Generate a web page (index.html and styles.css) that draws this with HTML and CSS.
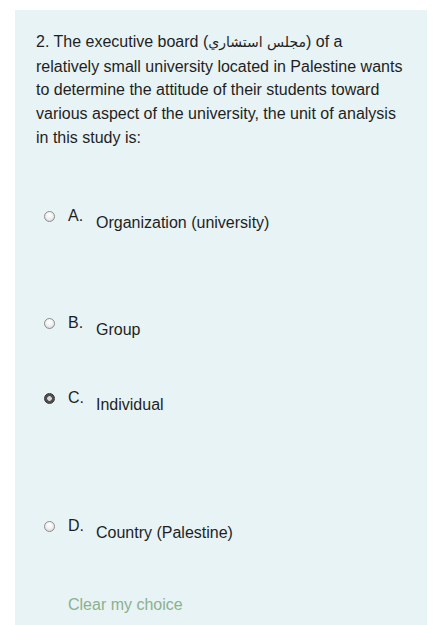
FILE: index.html
```html
<!DOCTYPE html>
<html>
<head>
<meta charset="utf-8">
<link rel="stylesheet" href="styles.css">
</head>
<body>
<div class="panel">
  <p class="question">2. The executive board (<span class="ar">مجلس استشاري</span>) of a relatively small university located in Palestine wants to determine the attitude of their students toward various aspect of the university, the unit of analysis in this study is:</p>
  <div class="answers">
    <div class="opt opt-a"><span class="radio"></span><span class="lbl">A.</span><span class="txt">Organization (university)</span></div>
    <div class="opt opt-b"><span class="radio"></span><span class="lbl">B.</span><span class="txt">Group</span></div>
    <div class="opt opt-c"><span class="radio checked"></span><span class="lbl">C.</span><span class="txt">Individual</span></div>
    <div class="opt opt-d"><span class="radio"></span><span class="lbl">D.</span><span class="txt">Country (Palestine)</span></div>
  </div>
  <div class="clear">Clear my choice</div>
</div>
</body>
</html>
```
FILE: styles.css
```css
html, body {
  margin: 0;
  padding: 0;
  background: #ffffff;
}
body {
  font-family: "Liberation Sans", Arial, "DejaVu Sans", sans-serif;
  color: #1f1f1f;
}
.panel {
  margin: 10px 0 0 15px;
  width: 412px;
  height: 615px;
  box-sizing: border-box;
  background: #e7f3f5;
  padding: 20px 20px 0 21px;
}
.question {
  margin: 0;
  font-size: 16px;
  line-height: 23.7px;
}
.ar {
  font-family: "DejaVu Sans", sans-serif;
  font-size: 14px;
}
.answers {
  display: flex;
  flex-direction: column;
}
.opt {
  display: flex;
  align-items: flex-start;
  line-height: 20px;
  font-size: 16px;
  margin-left: 8px;
}
.opt-a { margin-top: 56px; }
.opt-b { margin-top: 80px; }
.opt-c { margin-top: 48px; }
.opt-d { margin-top: 101px; }
.radio {
  flex: none;
  width: 9px;
  height: 9px;
  margin-top: 5px;
  border: 1px solid #8c8c8c;
  border-radius: 50%;
  background: radial-gradient(circle at 50% 35%, #ffffff 0%, #f2f2f2 45%, #cfcfcf 100%);
}
.radio.checked {
  border: 1px solid #333;
  background: radial-gradient(circle, #d8d8d8 0 2px, #4a4a4a 2.6px, #5c5c5c 100%);
}
.lbl {
  margin-left: 13px;
  width: 28px;
}
.txt {
  padding-top: 7px;
}
.clear {
  margin: 52px 0 0 32px;
  font-size: 16px;
  line-height: 20px;
  color: #8db08d;
}
```
